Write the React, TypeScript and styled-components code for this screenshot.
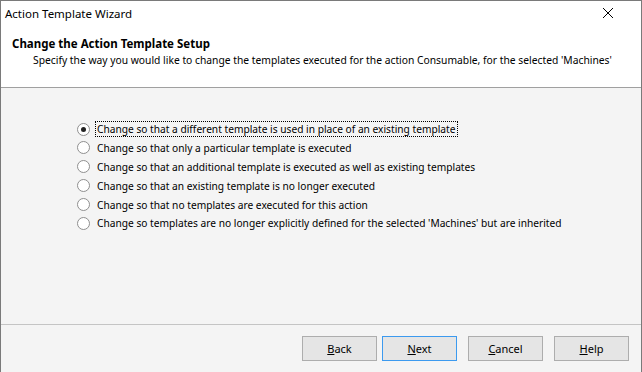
import styled, { createGlobalStyle } from 'styled-components';

const GlobalStyle = createGlobalStyle`
  html, body {
    margin: 0;
    padding: 0;
    background: #ffffff;
  }
  body {
    font-family: 'Noto Sans', 'Open Sans', sans-serif;
    color: #000;
  }
`;

const options = [
  'Change so that a different template is used in place of an existing template',
  'Change so that only a particular template is executed',
  'Change so that an additional template is executed as well as existing templates',
  'Change so that an existing template is no longer executed',
  'Change so that no templates are executed for this action',
  "Change so templates are no longer explicitly defined for the selected 'Machines' but are inherited",
];

function App() {
  return (
    <>
      <GlobalStyle />
      <Window>
        <TitleBar>
          <TitleText>Action Template Wizard</TitleText>
          <CloseIcon width="12" height="12" viewBox="0 0 12 12">
            <path d="M1 1 L11 11 M11 1 L1 11" stroke="#000" strokeWidth="1" fill="none" />
          </CloseIcon>
        </TitleBar>

        <Header>
          <HeaderTitle>Change the Action Template Setup</HeaderTitle>
          <HeaderSub>
            Specify the way you would like to change the templates executed for the action Consumable, for the selected 'Machines'
          </HeaderSub>
        </Header>

        <Body>
          <OptionList>
            {options.map((text, i) => (
              <OptionRow key={i}>
                <Radio checked={i === 0} />
                <OptionLabel focused={i === 0}>{text}</OptionLabel>
              </OptionRow>
            ))}
          </OptionList>
        </Body>

        <Footer>
          <Button>
            <u>B</u>ack
          </Button>
          <Button primary>
            <u>N</u>ext
          </Button>
          <Button gapLeft>
            <u>C</u>ancel
          </Button>
          <Button gapLeft>
            <u>H</u>elp
          </Button>
        </Footer>
      </Window>
    </>
  );
}

const Window = styled.div`
  width: 642px;
  height: 372px;
  box-sizing: border-box;
  border: 1px solid #7a7a7a;
  border-bottom: none;
  display: flex;
  flex-direction: column;
  background: #f4f4f4;
  overflow: hidden;
`;

const TitleBar = styled.div`
  height: 29px;
  display: flex;
  align-items: center;
  justify-content: space-between;
  padding: 0 27px 0 4px;
  background: #ffffff;
  flex-shrink: 0;
`;

const TitleText = styled.span`
  font-size: 11.5px;
  color: #000;
  margin-top: -5px;
`;

const CloseIcon = styled.svg`
  margin-top: -5px;
`;

const Header = styled.div`
  height: 51px;
  background: #ffffff;
  border-bottom: 1px solid #a0a0a0;
  padding: 6px 0 0 11px;
  box-sizing: content-box;
  flex-shrink: 0;
`;

const HeaderTitle = styled.div`
  font-size: 11.5px;
  font-weight: bold;
  line-height: 16px;
`;

const HeaderSub = styled.div`
  font-size: 10.3px;
  line-height: 16px;
  padding-left: 21px;
  white-space: nowrap;
`;

const Body = styled.div`
  flex: 1;
  padding: 33px 0 0 76px;
  border-bottom: 1px solid #c4c4c4;
`;

const OptionList = styled.div`
  display: flex;
  flex-direction: column;
  gap: 2.9px;
`;

const OptionRow = styled.div`
  display: flex;
  align-items: center;
  height: 16px;
`;

const Radio = styled.span<{ checked?: boolean }>`
  width: 11px;
  height: 11px;
  border-radius: 50%;
  border: 1px solid #8f8f8f;
  background: #ffffff;
  position: relative;
  flex-shrink: 0;
  margin-right: 6px;

  &::after {
    content: '';
    display: ${(p) => (p.checked ? 'block' : 'none')};
    position: absolute;
    left: 3px;
    top: 3px;
    width: 5px;
    height: 5px;
    border-radius: 50%;
    background: #222;
  }
`;

const OptionLabel = styled.span<{ focused?: boolean }>`
  font-size: 10.2px;
  line-height: 14px;
  padding: 0 1px;
  white-space: nowrap;
  outline: ${(p) => (p.focused ? '1px dotted #000' : 'none')};
`;

const Footer = styled.div`
  height: 47px;
  flex-shrink: 0;
  display: flex;
  align-items: flex-start;
  justify-content: flex-end;
  padding: 11px 12px 0 0;
  box-sizing: border-box;
  gap: 5px;
`;

const Button = styled.button<{ primary?: boolean; gapLeft?: boolean }>`
  width: 75px;
  height: 25px;
  box-sizing: border-box;
  border: 1px solid ${(p) => (p.primary ? '#3c9aef' : '#adadad')};
  background: #e5e5e5;
  font-family: 'Noto Sans', 'Open Sans', sans-serif;
  font-size: 11px;
  color: #000;
  padding: 0;
  margin-left: ${(p) => (p.gapLeft ? '6px' : '0')};
`;

export default App;
